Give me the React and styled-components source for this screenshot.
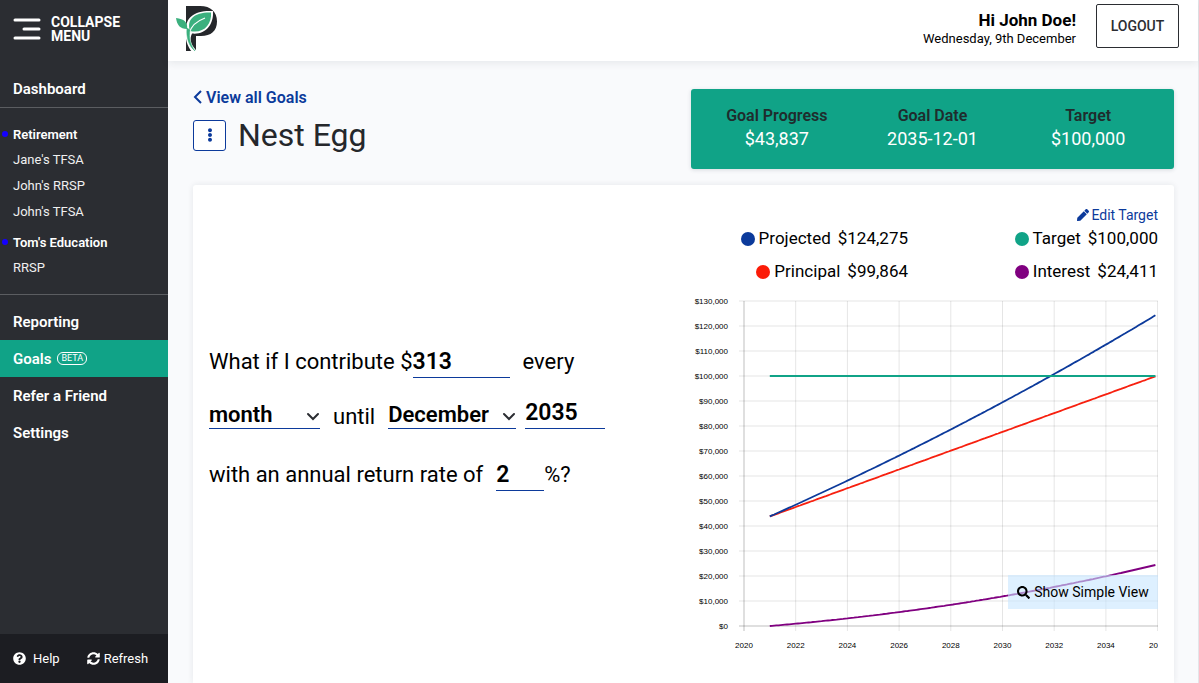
import React, { useState } from "react"
import styled, { createGlobalStyle } from "styled-components"
import { FaEllipsisV, FaPen, FaQuestionCircle, FaSearch, FaSyncAlt } from "react-icons/fa"

const GREEN = "#10a387"
const BLUE = "#0c3a9b"

const START_BALANCE = 43837
const MONTHS = 179
const MONTH_NAMES = ["January", "February", "March", "April", "May", "June", "July",
  "August", "September", "October", "November", "December"]

const GlobalStyle = createGlobalStyle`
  * {
    box-sizing: border-box;
  }
  body {
    margin: 0;
    background: #f9fafc;
    color: #000;
    font-family: Roboto, "Liberation Sans", sans-serif;
    font-size: 14px;
  }
  button, input, select {
    font-family: inherit;
    color: inherit;
  }
  a {
    text-decoration: none;
  }
`

const Page = styled.div`
  display: flex;
  height: 100vh;
  overflow: hidden;
`

const Sidebar = styled.nav`
  flex: 0 0 168px;
  display: flex;
  flex-direction: column;
  background: #2b2d32;
  color: #fff;
`

const CollapseButton = styled.button`
  display: flex;
  align-items: center;
  gap: 10px;
  height: 58px;
  margin-bottom: 12px;
  padding: 0 13px;
  border: 0;
  background: none;
  font-size: 14px;
  font-weight: 700;
  line-height: 14px;
  text-align: left;
`

const NavLink = styled.a`
  display: flex;
  align-items: center;
  gap: 6px;
  height: 37px;
  padding: 0 13px;
  background: ${ ({ $active }) => $active ? GREEN : "none" };
  color: #fff;
  font-size: 15px;
  font-weight: 600;
`

const Badge = styled.span`
  padding: 0 3px;
  border: 1px solid #fff;
  border-radius: 6px;
  font-size: 9px;
  font-weight: 400;
  line-height: 11px;
`

const Accounts = styled.div`
  height: 188px;
  padding-top: 13px;
  margin-bottom: 8px;
  border-top: 1px solid #5b5d61;
  border-bottom: 1px solid #5b5d61;
`

const GroupTitle = styled.a`
  display: flex;
  align-items: center;
  gap: 5px;
  height: 26px;
  padding-left: 2px;
  color: #fff;
  font-size: 13px;
  font-weight: 600;

  &::before {
    content: "";
    width: 6px;
    height: 6px;
    border-radius: 50%;
    background: #1400ff;
  }
`

const AccountLink = styled.a`
  display: block;
  padding-left: 13px;
  color: #f0f0f0;
  font-size: 13px;
  line-height: 26px;
`

const Group = styled.div`
  margin-bottom: 4px;
`

const SidebarFooter = styled.div`
  display: flex;
  align-items: center;
  gap: 27px;
  height: 49px;
  margin-top: auto;
  padding: 0 13px;
  background: #1c1d22;
`

const FooterButton = styled.button`
  display: flex;
  align-items: center;
  gap: ${ ({ $gap }) => $gap };
  padding: 0;
  border: 0;
  background: none;
  font-size: 13px;
`

const Main = styled.main`
  flex: 1;
  min-width: 0;
  display: flex;
  flex-direction: column;
  border-right: 1px solid #e4e5e9;
`

const Header = styled.header`
  display: flex;
  flex: 0 0 61px;
  align-items: flex-start;
  padding: 4px 19px 0 8px;
  background: #fff;
  box-shadow: 0 2px 8px rgba(30, 40, 60, 0.09);
`

const Greeting = styled.div`
  margin: 6px 20px 0 auto;
  font-size: 13px;
  line-height: 18px;
  text-align: right;
`

const UserName = styled.div`
  font-size: 17px;
  font-weight: 700;
  line-height: 20px;
`

const LogoutButton = styled.button`
  width: 83px;
  height: 44px;
  border: 1px solid #2b2d32;
  border-radius: 2px;
  background: #fff;
  color: #2b2d32;
  font-size: 14px;
  font-weight: 500;
`

const Content = styled.div`
  flex: 1;
  display: flex;
  flex-direction: column;
  gap: 16px;
  padding: 28px 24px 0 25px;
`

const TopRow = styled.div`
  display: grid;
  grid-template-columns: 1fr 1fr;
  gap: 15px;
  height: 80px;
`

const BackLink = styled.a`
  display: flex;
  align-items: center;
  gap: 4px;
  width: fit-content;
  height: 16px;
  color: ${ BLUE };
  font-size: 16px;
  font-weight: 600;
`

const TitleRow = styled.div`
  display: flex;
  align-items: center;
  gap: 12px;
  height: 60px;
`

const MenuButton = styled.button`
  display: flex;
  align-items: center;
  justify-content: center;
  width: 33px;
  height: 31px;
  padding: 0;
  border: 1px solid ${ BLUE };
  border-radius: 3px;
  background: #fff;
  color: ${ BLUE };
`

const Title = styled.h1`
  margin: 0;
  color: #25272b;
  font-size: 32px;
  font-weight: 400;
`

const Summary = styled.div`
  display: grid;
  grid-template-columns: repeat(3, 1fr);
  padding: 15px 8px 0;
  border-radius: 3px;
  background: ${ GREEN };
  box-shadow: 0 1px 4px rgba(30, 40, 60, 0.15);
  color: #fff;
  font-size: 18px;
  line-height: 23px;
  text-align: center;
`

const SummaryLabel = styled.div`
  color: #1f2c2d;
  font-size: 16px;
  font-weight: 600;
`

const Card = styled.section`
  flex: 1;
  display: grid;
  grid-template-columns: 1fr 1fr;
  gap: 15px;
  align-items: start;
  padding: 16px;
  border-radius: 3px 3px 0 0;
  background: #fff;
  box-shadow: 0 0 6px rgba(30, 40, 60, 0.09);
`

const Scenario = styled.form`
  align-self: center;
  padding-bottom: 32px;
  font-size: 22px;
`

const Sentence = styled.div`
  display: flex;
  align-items: flex-end;
  height: 33px;
  margin-bottom: ${ ({ $gap }) => $gap };
  white-space: nowrap;
`

const Word = styled.label`
  padding: 0 ${ ({ $right }) => $right || "0" } 0 ${ ({ $left }) => $left || "0" };
  line-height: ${ ({ $low }) => $low ? "24px" : "33px" };
`

const Field = styled.input`
  width: ${ ({ $width }) => $width };
  height: 33px;
  padding: 0;
  border: 0;
  border-bottom: 1px solid ${ BLUE };
  background: none;
  font-size: 23px;
  font-weight: 600;
  outline: none;
`

const SelectBox = styled.div`
  position: relative;
  width: ${ ({ $width }) => $width };
  margin-right: ${ ({ $right }) => $right || "0" };

  svg {
    position: absolute;
    right: 0;
    bottom: 7px;
    pointer-events: none;
  }
`

const Select = styled.select`
  display: block;
  width: 100%;
  height: 29px;
  padding: 0;
  appearance: none;
  border: 0;
  border-bottom: 1px solid ${ BLUE };
  background: none;
  font-size: 22px;
  font-weight: 600;
  outline: none;
`

const EditLink = styled.a`
  display: flex;
  align-items: center;
  justify-content: flex-end;
  gap: 2px;
  height: 28px;
  color: ${ BLUE };
  font-size: 14px;
`

const Legend = styled.div`
  display: grid;
  grid-template-columns: 1fr 1fr;
  column-gap: 33px;
  margin: -7px 0 2px;
  font-size: 17px;
  line-height: 33px;
`

const LegendItem = styled.div`
  display: flex;
  align-items: center;
  justify-content: flex-end;
`

const LegendDot = styled.span`
  width: 14px;
  height: 14px;
  margin-right: 4px;
  border-radius: 50%;
  background: ${ ({ $color }) => $color };
`

const LegendValue = styled.span`
  margin-left: 7px;
`

const ChartBox = styled.div`
  position: relative;
`

const ChartSvg = styled.svg`
  display: block;
  width: 100%;
  font-family: "Liberation Sans", Arial, sans-serif;
  font-size: 8px;
`

const SimpleViewButton = styled.button`
  position: absolute;
  right: 0;
  bottom: 47px;
  display: flex;
  align-items: center;
  justify-content: center;
  gap: 4px;
  width: 150px;
  height: 34px;
  padding: 0;
  border: 0;
  background: rgba(200, 230, 255, 0.6);
  font-size: 14px;
`

const Logo = () => (
  <svg width="42" height="48" viewBox="0 0 42 48" aria-label="Logo">
    <path d="M10 2H24C35 2 41 8 41 17.500C41 27 35 32 25 32H20V47H10Z" fill="#25272b" />
    <path d="M10 27C9 13 19 6 37 7C38 21 29 31 16 29.500C13 35 15 42 22 48H16C11 42 9 35 10 27Z" fill="#fff" />
    <path d="M14 27C10 15 19 8 35 8.500C36 21 27 30 14 27Z" fill="#3bb07e" />
    <path d="M11 25C4 25 1 21 0 14C8 15 12 18 11 25Z" fill="#3bb07e" />
    <path d="M29 14C21 17 15 22 13.500 29" fill="none" stroke="#fff" strokeWidth="1.300" />
    <path d="M11 24C10 34 13 42 19 47C14 40 12.500 33 14 26Z" fill="#3bb07e" stroke="#3bb07e" strokeWidth="0.500" />
  </svg>
)

const BackArrow = () => (
  <svg width="9" height="14" viewBox="0 0 9 14" fill="none" stroke={ BLUE } strokeWidth="2">
    <path d="M8 1L2 7L8 13" />
  </svg>
)

const Chevron = () => (
  <svg width="14" height="10" viewBox="0 0 14 10" fill="none" stroke="#2b2d32" strokeWidth="2">
    <path d="M2 2L7 7L12 2" strokeLinecap="round" />
  </svg>
)

const yearToX = (year) => 53 + (year - 2020) * 25.85
const moneyToY = (money) => 336 - money * 0.0025

const toPoints = (valueAt) => (
  Array.from({ length: MONTHS + 1 }, (_, i) => (
    `${ yearToX(2021 + i / 12).toFixed(1) },${ moneyToY(valueAt(i)).toFixed(1) }`
  )).join(" ")
)

const Chart = ({ contribution, rate }) => {
  const principal = (i) => START_BALANCE + contribution * i
  const projected = (i) => {
    const r = rate / 100 / 12
    const growth = Math.pow(1 + r, i)
    return START_BALANCE * growth + (r ? contribution * (growth - 1) / r : contribution * i)
  }

  const lines = [
    { color: "#800080", valueAt: (i) => projected(i) - principal(i) },
    { color: "#f7200f", valueAt: principal },
    { color: BLUE, valueAt: projected },
    { color: GREEN, valueAt: () => 100000 },
  ]

  return (
    <ChartSvg viewBox="0 0 467 366">
      {Array.from({ length: 14 }, (_, i) => i * 10000).map((money) => (
        <g key={ money }>
          <line x1="48" x2="467" y1={ moneyToY(money) } y2={ moneyToY(money) } stroke="#000" strokeOpacity={ money ? 0.1 : 0.25 } />
          <text x="37" y={ moneyToY(money) + 3 } textAnchor="end">${money.toLocaleString("en-US")}</text>
        </g>
      ))}
      {Array.from({ length: 9 }, (_, i) => 2020 + i * 2).map((year) => (
        <g key={ year }>
          <line x1={ yearToX(year) } x2={ yearToX(year) } y1="11" y2="341" stroke="#000" strokeOpacity={ year === 2020 ? 0.25 : 0.1 } />
          {year < 2036 && <text x={ yearToX(year) } y="358" textAnchor="middle">{year}</text>}
        </g>
      ))}
      <text x="467" y="358" textAnchor="end">20</text>
      {lines.map(({ color, valueAt }) => (
        <polyline key={ color } points={ toPoints(valueAt) } fill="none" stroke={ color } strokeWidth="1.800" />
      ))}
    </ChartSvg>
  )
}

const LEGEND = [
  { label: "Projected", value: "$124,275", color: BLUE },
  { label: "Target", value: "$100,000", color: GREEN },
  { label: "Principal", value: "$99,864", color: "#fb1b07" },
  { label: "Interest", value: "$24,411", color: "#800080" },
]

export default () => {
  const [amount, setAmount] = useState("313")
  const [rate, setRate] = useState("2")

  return (
    <>
    <GlobalStyle />
    <Page>
      <Sidebar>
        <CollapseButton>
          <svg width="28" height="22" viewBox="0 0 28 22" stroke="#fff" strokeWidth="3" strokeLinecap="round">
            <path d="M2 2H26M11 11H26M2 20H26" />
          </svg>
          <span>COLLAPSE<br />MENU</span>
        </CollapseButton>
        <NavLink href="#dashboard">Dashboard</NavLink>
        <Accounts>
          <Group>
            <GroupTitle href="#retirement">Retirement</GroupTitle>
            <AccountLink href="#jane-tfsa">Jane's TFSA</AccountLink>
            <AccountLink href="#john-rrsp">John's RRSP</AccountLink>
            <AccountLink href="#john-tfsa">John's TFSA</AccountLink>
          </Group>
          <Group>
            <GroupTitle href="#education">Tom's Education</GroupTitle>
            <AccountLink href="#rrsp">RRSP</AccountLink>
          </Group>
        </Accounts>
        <NavLink href="#reporting">Reporting</NavLink>
        <NavLink href="#goals" $active>Goals <Badge>BETA</Badge></NavLink>
        <NavLink href="#refer">Refer a Friend</NavLink>
        <NavLink href="#settings">Settings</NavLink>
        <SidebarFooter>
          <FooterButton $gap="7px"><FaQuestionCircle size={ 13 } />Help</FooterButton>
          <FooterButton $gap="4px"><FaSyncAlt size={ 13 } />Refresh</FooterButton>
        </SidebarFooter>
      </Sidebar>

      <Main>
        <Header>
          <Logo />
          <Greeting>
            <UserName>Hi John Doe!</UserName>
            Wednesday, 9th December
          </Greeting>
          <LogoutButton>LOGOUT</LogoutButton>
        </Header>

        <Content>
          <TopRow>
            <div>
              <BackLink href="#goals"><BackArrow />View all Goals</BackLink>
              <TitleRow>
                <MenuButton aria-label="Goal options"><FaEllipsisV size={ 14 } /></MenuButton>
                <Title>Nest Egg</Title>
              </TitleRow>
            </div>
            <Summary>
              <div><SummaryLabel>Goal Progress</SummaryLabel>$43,837</div>
              <div><SummaryLabel>Goal Date</SummaryLabel>2035-12-01</div>
              <div><SummaryLabel>Target</SummaryLabel>$100,000</div>
            </Summary>
          </TopRow>

          <Card>
            <Scenario onSubmit={ (event) => event.preventDefault() }>
              <Sentence $gap="18px">
                <Word htmlFor="amount">What if I contribute $</Word>
                <Field id="amount" $width="97px" value={ amount } onChange={ (event) => setAmount(event.target.value) } />
                <Word htmlFor="frequency" $left="13px">every</Word>
              </Sentence>
              <Sentence $gap="29px">
                <SelectBox $width="111px">
                  <Select id="frequency" defaultValue="month">
                    <option>week</option>
                    <option>month</option>
                    <option>year</option>
                  </Select>
                  <Chevron />
                </SelectBox>
                <Word htmlFor="until-month" $low $left="13px" $right="13px">until</Word>
                <SelectBox $width="128px" $right="9px">
                  <Select id="until-month" defaultValue="December">
                    {MONTH_NAMES.map((name) => <option key={ name }>{name}</option>)}
                  </Select>
                  <Chevron />
                </SelectBox>
                <Field aria-label="Year" $width="80px" defaultValue="2035" />
              </Sentence>
              <Sentence $gap="0">
                <Word htmlFor="rate" $right="13px">with an annual return rate of</Word>
                <Field id="rate" $width="48px" value={ rate } onChange={ (event) => setRate(event.target.value) } />
                <Word htmlFor="rate">%?</Word>
              </Sentence>
            </Scenario>

            <div>
              <EditLink href="#edit"><FaPen size={ 12 } />Edit Target</EditLink>
              <Legend>
                {LEGEND.map(({ label, value, color }) => (
                  <LegendItem key={ label }>
                    <LegendDot $color={ color } />
                    {label}
                    <LegendValue>{value}</LegendValue>
                  </LegendItem>
                ))}
              </Legend>
              <ChartBox>
                <Chart contribution={ Number(amount) || 0 } rate={ Number(rate) || 0 } />
                <SimpleViewButton><FaSearch size={ 13 } />Show Simple View</SimpleViewButton>
              </ChartBox>
            </div>
          </Card>
        </Content>
      </Main>
    </Page>
    </>
  )
}
